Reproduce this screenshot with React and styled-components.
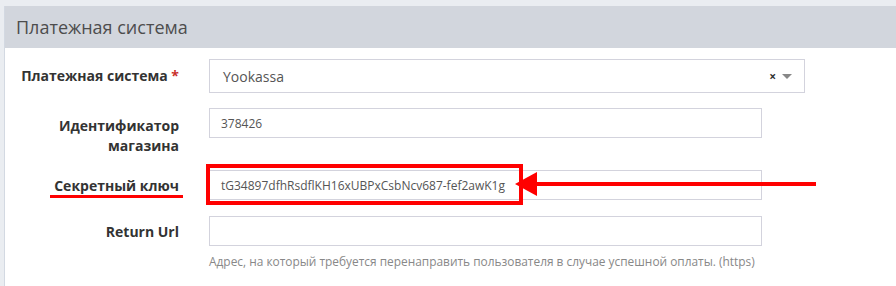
import React from "react";
import styled, { createGlobalStyle } from "styled-components";

const Global = createGlobalStyle`
  html, body { margin: 0; padding: 0; background: #eaedf1; }
  body { font-family: "Open Sans", "Noto Sans", sans-serif; width: 896px; height: 286px; overflow: hidden; }
`;

const Panel = styled.div`
  margin: 6px 0 0 4px;
  background: #fff;
  border-left: 1px solid #d3d9e2;
  height: 280px;
`;

const Header = styled.div`
  height: 42px;
  background: #d2d6dd;
  display: flex;
  align-items: center;
  padding-left: 11px;
  font-size: 18px;
  color: #4d4d4d;
`;

const Body = styled.div`
  padding-top: 11px;
  display: flex;
  flex-direction: column;
`;

const Row = styled.div`
  display: grid;
  grid-template-columns: 174px auto;
  column-gap: 30px;
  align-items: start;
  margin-bottom: ${(p) => p.$mb ?? 15}px;
`;

const Label = styled.label`
  position: relative;
  text-align: right;
  font-weight: 700;
  font-size: 14px;
  line-height: 20px;
  color: #333;
  padding-top: ${(p) => p.$pt ?? 6}px;
`;

const Req = styled.span`
  color: #c9302c;
`;

const Underline = styled.span`
  position: absolute;
  right: -4px;
  top: 25px;
  width: 133px;
  height: 3px;
  background: #f00;
`;

const Select = styled.div`
  width: 596px;
  height: 34px;
  box-sizing: border-box;
  border: 1px solid #d3d3dd;
  display: flex;
  align-items: center;
  padding: 0 12px 0 13px;
  font-size: 14px;
  color: #555;
`;

const SelectValue = styled.span`
  flex: 1;
`;

const Clear = styled.span`
  font-size: 12px;
  font-weight: 700;
  color: #333;
  margin-right: 6px;
`;

const Caret = styled.span`
  width: 0;
  height: 0;
  border-left: 5px solid transparent;
  border-right: 5px solid transparent;
  border-top: 5px solid #888;
  margin-top: 1px;
`;

const Field = styled.div`
  position: relative;
  width: 553px;
`;

const Input = styled.div`
  height: 30px;
  box-sizing: border-box;
  border: 1px solid #d3d3dd;
  display: flex;
  align-items: center;
  padding: 0 11px;
  font-size: 12px;
  color: #555;
`;

const Highlight = styled.div`
  position: absolute;
  left: -3px;
  top: -6px;
  width: 317px;
  height: 41px;
  box-sizing: border-box;
  border: 4px solid #f00;
`;

const Arrow = styled.svg`
  position: absolute;
  left: 306px;
  top: 2px;
  overflow: visible;
`;

const Help = styled.div`
  margin-top: 7px;
  font-size: 11.9px;
  color: #888;
  white-space: nowrap;
`;

export default function App() {
  return (
    <>
      <Global />
      <Panel>
        <Header>Платежная система</Header>
        <Body>
          <Row>
            <Label $pt={7}>
              Платежная система <Req>*</Req>
            </Label>
            <Select>
              <SelectValue>Yookassa</SelectValue>
              <Clear>×</Clear>
              <Caret />
            </Select>
          </Row>
          <Row $mb={14}>
            <Label $pt={8}>
              Идентификатор
              <br />
              магазина
            </Label>
            <Field>
              <Input>378426</Input>
            </Field>
          </Row>
          <Row $mb={16}>
            <Label $pt={6}>
              Секретный ключ
              <Underline />
            </Label>
            <Field>
              <Input>tG34897dfhRsdflKH16xUBPxCsbNcv687-fef2awK1g</Input>
              <Highlight />
              <Arrow width="301" height="24" viewBox="0 0 301 24">
                <polygon points="0,12 22,0 22,24" fill="#f00" />
                <rect x="20" y="10" width="281" height="4" fill="#f00" />
              </Arrow>
            </Field>
          </Row>
          <Row>
            <Label $pt={6}>Return Url</Label>
            <Field>
              <Input />
              <Help>
                Адрес, на который требуется перенаправить пользователя в случае успешной оплаты. (https)
              </Help>
            </Field>
          </Row>
        </Body>
      </Panel>
    </>
  );
}
